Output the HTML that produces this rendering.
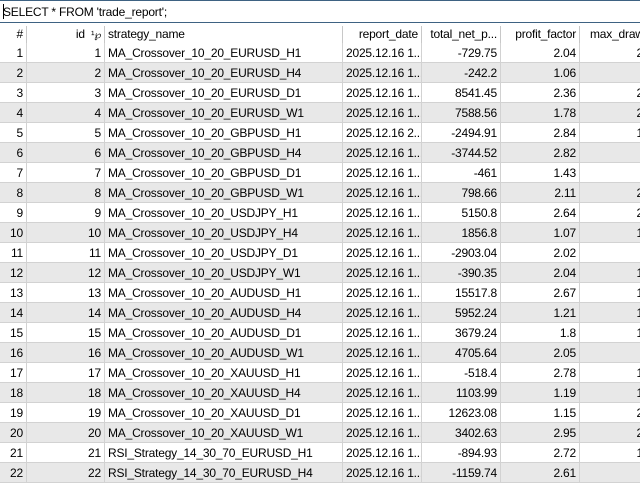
<!DOCTYPE html>
<html><head><style>
body{margin:0;width:640px;height:480px;overflow:hidden;background:#fff;font-family:"Liberation Sans",sans-serif;font-size:12px;color:#000;position:relative}
.bar{position:absolute;left:0;top:0;width:640px;height:21px;border-top:1px solid #3e6282;border-bottom:1px solid #3e6282;}
.bar span{position:absolute;left:3px;top:4px;letter-spacing:-0.2px}
.bar i{position:absolute;left:3px;top:3px;width:1px;height:15px;background:#000}
.r{position:absolute;left:0;width:640px;height:19px;border-bottom:1px solid #d2d2d2}
.r.g{background:#e8e8e8}
.c{position:absolute;top:0;height:20px;line-height:20px;white-space:nowrap;overflow:hidden;box-sizing:border-box;padding:0 3px;border-right:1px solid #d2d2d2;letter-spacing:-0.2px}
.h .c{border-right:1px solid #c8c8c8;height:17px;top:3px;line-height:16px}
.h{border-bottom:none;}
.rt{text-align:right}
</style></head><body>
<div class="bar"><i></i><span>SELECT * FROM 'trade_report';</span></div>
<div id="t"></div>
<script>
var cols=[[0,27,'rt'],[27,78,'rt'],[105,238,''],[343,79,'rt'],[422,79,'rt'],[501,79,'rt'],[580,70,'rt']];
var names=["MA_Crossover_10_20_EURUSD_H1","MA_Crossover_10_20_EURUSD_H4","MA_Crossover_10_20_EURUSD_D1","MA_Crossover_10_20_EURUSD_W1","MA_Crossover_10_20_GBPUSD_H1","MA_Crossover_10_20_GBPUSD_H4","MA_Crossover_10_20_GBPUSD_D1","MA_Crossover_10_20_GBPUSD_W1","MA_Crossover_10_20_USDJPY_H1","MA_Crossover_10_20_USDJPY_H4","MA_Crossover_10_20_USDJPY_D1","MA_Crossover_10_20_USDJPY_W1","MA_Crossover_10_20_AUDUSD_H1","MA_Crossover_10_20_AUDUSD_H4","MA_Crossover_10_20_AUDUSD_D1","MA_Crossover_10_20_AUDUSD_W1","MA_Crossover_10_20_XAUUSD_H1","MA_Crossover_10_20_XAUUSD_H4","MA_Crossover_10_20_XAUUSD_D1","MA_Crossover_10_20_XAUUSD_W1","RSI_Strategy_14_30_70_EURUSD_H1","RSI_Strategy_14_30_70_EURUSD_H4"];
var net=["-729.75","-242.2","8541.45","7588.56","-2494.91","-3744.52","-461","798.66","5150.8","1856.8","-2903.04","-390.35","15517.8","5952.24","3679.24","4705.64","-518.4","1103.99","12623.08","3402.63","-894.93","-1159.74"];
var pf=["2.04","1.06","2.36","1.78","2.84","2.82","1.43","2.11","2.64","1.07","2.02","2.04","2.67","1.21","1.8","2.05","2.78","1.19","1.15","2.95","2.72","2.61"];
var md=["2","","2","2","1","","","2","2","1","","1","1","1","1","","1","1","2","2","1",""];
var h='<div class="r h" style="top:23px">';
var hd=['#','id&nbsp; <span style="font-size:10px">&#185;&#8472;</span>','strategy_name','report_date','total_net_p...','profit_factor','max_draw'];
cols.forEach(function(c,i){h+='<div class="c '+(i==2?'':'rt')+'" style="left:'+c[0]+'px;width:'+c[1]+'px;'+(i==6?'text-align:left;padding-left:10px;':'')+'">'+hd[i]+'</div>'});
h+='</div>';
for(var k=0;k<22;k++){
 var v=[k+1,k+1,names[k],'2025.12.16 '+(k==4?'2':'1')+'...',net[k],pf[k],md[k]];
 h+='<div class="r'+(k%2?' g':'')+'" style="top:'+(43+k*20)+'px">';
 cols.forEach(function(c,i){h+='<div class="c '+c[2]+'" style="left:'+c[0]+'px;width:'+c[1]+'px;'+(i==6?'padding-right:7px;border-right:none':'')+'">'+v[i]+'</div>'});
 h+='</div>';
}
document.getElementById('t').innerHTML=h;
</script>
</body></html>
